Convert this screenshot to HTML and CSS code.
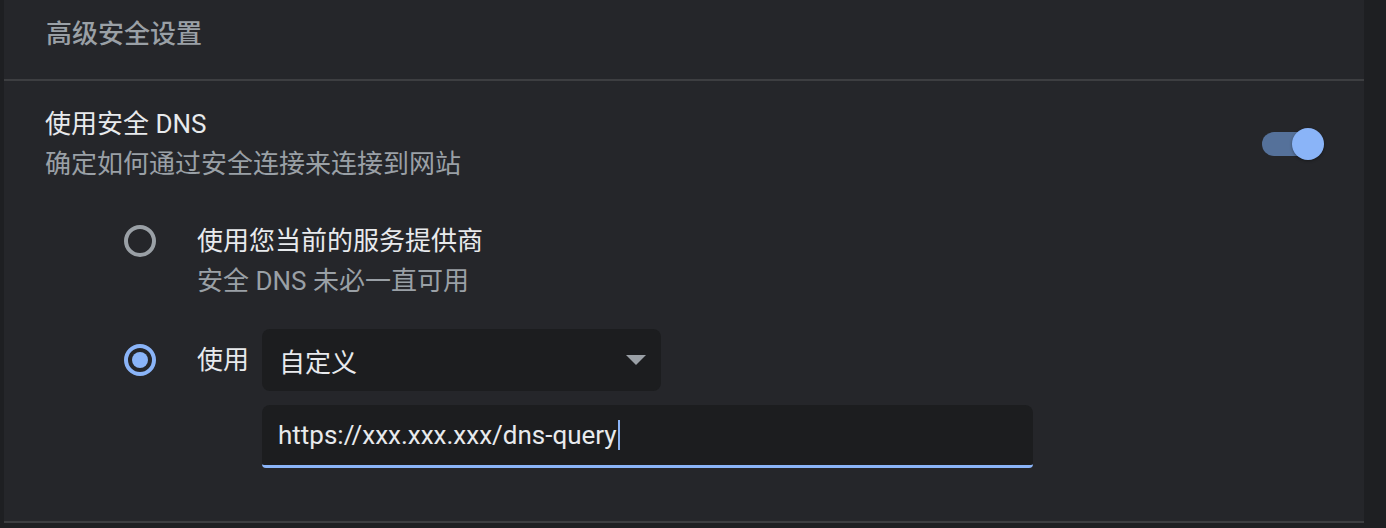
FILE: index.html
```html
<!DOCTYPE html>
<html lang="zh-CN">
<head>
<meta charset="utf-8">
<title>高级安全设置</title>
<link rel="stylesheet" href="styles.css">
</head>
<body>
<div class="page">
  <div class="card">
    <div class="section-title">高级安全设置</div>
    <div class="dns">
      <div class="dns-row">
        <div class="labels">
          <div class="primary">使用安全 DNS</div>
          <div class="secondary">确定如何通过安全连接来连接到网站</div>
        </div>
        <div class="toggle"><span class="track"></span><span class="knob"></span></div>
      </div>
      <div class="radios">
        <div class="option">
          <div class="radio-box line"><span class="radio"></span></div>
          <div class="labels">
            <div class="primary">使用您当前的服务提供商</div>
            <div class="secondary">安全 DNS 未必一直可用</div>
          </div>
        </div>
        <div class="option custom">
          <div class="radio-box field"><span class="radio checked"></span></div>
          <div class="custom-body">
            <div class="custom-row">
              <span class="primary">使用</span>
              <div class="select"><span>自定义</span><span class="arrow"></span></div>
            </div>
            <div class="input"><span class="input-text">https://xxx.xxx.xxx/dns-query</span><span class="caret"></span></div>
          </div>
        </div>
      </div>
    </div>
  </div>
</div>
</body>
</html>
```
FILE: styles.css
```css
* { box-sizing: border-box; }
html, body { margin: 0; padding: 0; }
body {
  background: #1e1f22;
  font-family: Roboto, "Noto Sans CJK SC", sans-serif;
  font-size: 26px;
  color: #e8eaed;
  width: 1386px;
  height: 528px;
  overflow: hidden;
}
.page { padding-left: 4px; }
.card {
  width: 1360px;
  height: 523px;
  background: #25262a;
  border-bottom: 2px solid #3d3e41;
}
.section-title {
  height: 81px;
  padding: 14px 0 0 42px;
  line-height: 40px;
  color: #9aa0a6;
  font-weight: 500;
  border-bottom: 2px solid #3d3e41;
}
.dns { padding: 23px 40px 0 41px; }
.dns-row {
  display: flex;
  align-items: center;
  justify-content: space-between;
}
.labels { line-height: 40px; }
.primary { color: #e8eaed; line-height: 40px; }
.secondary { color: #9aa0a6; }
.toggle {
  position: relative;
  width: 62px;
  height: 32px;
  display: flex;
  align-items: center;
}
.track {
  width: 52px;
  height: 24px;
  border-radius: 12px;
  background: #55719a;
}
.knob {
  position: absolute;
  right: 0;
  top: 0;
  width: 32px;
  height: 32px;
  border-radius: 50%;
  background: #8ab4f8;
  box-shadow: 0 1px 3px rgba(0,0,0,0.35);
}
.radios { margin-top: 37px; padding-left: 79px; }
.option { display: flex; gap: 41px; }
.option.custom { margin-top: 28px; }
.radio-box { width: 32px; display: flex; align-items: center; justify-content: center; }
.radio-box.line { height: 40px; }
.radio-box.field { height: 62px; }
.radio {
  width: 32px;
  height: 32px;
  border-radius: 50%;
  border: 4px solid #9aa0a6;
}
.radio.checked {
  border-color: #8ab4f8;
  display: flex;
  align-items: center;
  justify-content: center;
}
.radio.checked::after {
  content: "";
  width: 16px;
  height: 16px;
  border-radius: 50%;
  background: #8ab4f8;
}
.custom-row { display: flex; align-items: center; gap: 13px; }
.select {
  width: 399px;
  height: 62px;
  background: #1c1d1f;
  border-radius: 8px;
  padding: 0 15px 0 17px;
  display: flex;
  align-items: center;
  justify-content: space-between;
  color: #e8eaed;
}
.arrow {
  width: 0;
  height: 0;
  border-left: 10px solid transparent;
  border-right: 10px solid transparent;
  border-top: 10px solid #9aa0a6;
}
.input {
  margin-top: 14px;
  margin-left: 65px;
  width: 771px;
  height: 63px;
  background: #1c1d1f;
  border-radius: 8px 8px 4px 4px;
  border-bottom: 3px solid #8ab4f8;
  padding-left: 16px;
  display: flex;
  align-items: center;
}
.input-text { color: #e8eaed; }
.caret {
  width: 2px;
  height: 30px;
  background: #8ab4f8;
  margin-left: 1px;
}
```
